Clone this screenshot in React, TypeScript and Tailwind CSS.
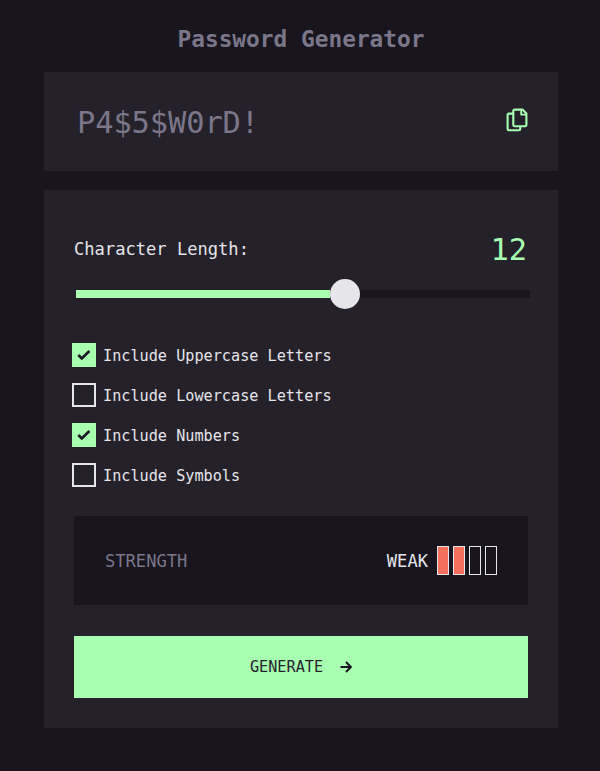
const options = [
  { label: 'Include Uppercase Letters', checked: true },
  { label: 'Include Lowercase Letters', checked: false },
  { label: 'Include Numbers', checked: true },
  { label: 'Include Symbols', checked: false },
];

function CopyIcon() {
  return (
    <svg width="22" height="24" viewBox="0 0 22 24" fill="none" stroke="#a7ffaf" strokeWidth="2.1" strokeLinejoin="round">
      <path d="M8.5 1.6h8L20.4 5.5V17a1.2 1.2 0 0 1-1.2 1.2H8.5A1.2 1.2 0 0 1 7.300 17V2.800A1.2 1.2 0 0 1 8.500 1.600Z" />
      <path d="M15.2 2v4.6h5" strokeWidth="1.9" />
      <path d="M7 5.600H2.800a1.2 1.2 0 0 0-1.200 1.200v14.300a1.2 1.2 0 0 0 1.200 1.200h10.200a1.2 1.2 0 0 0 1.200-1.200V18.500" />
    </svg>
  );
}

function Option({ label, checked }: { label: string; checked: boolean }) {
  return (
    <label className="flex h-10 items-center gap-[7px]">
      <span
        className={
          checked
            ? 'flex size-6 items-center justify-center bg-[#a7ffaf]'
            : 'size-6 border-2 border-[#e6e5ea]'
        }
      >
        {checked && (
          <svg width="14" height="12" viewBox="0 0 14 12" fill="none" stroke="#18171f" strokeWidth="2.6">
            <path d="M1.300 6 4.800 9.500 12.400 2" />
          </svg>
        )}
      </span>
      <span className="pt-0.5 text-[15.2px] leading-5">{label}</span>
    </label>
  );
}

export default function App() {
  return (
    <main className="flex h-[771px] w-[600px] flex-col bg-[#18151e] pl-11 pr-[42px] font-['DejaVu_Sans_Mono',monospace] text-[#e6e5ea]">
      <h1 className="h-[72px] pt-[23px] text-center text-[22.8px] font-bold leading-8 text-[#7b768a]">
        Password Generator
      </h1>

      <section className="flex h-[99px] items-center justify-between bg-[#24212b] pl-[33px] pr-[30px]">
        <p className="pt-0.5 text-[30.4px] leading-10 tracking-[-0.1px] text-[#7b768a]">P4$5$W0rD!</p>
        <button className="-mt-1" aria-label="Copy password">
          <CopyIcon />
        </button>
      </section>

      <section className="mt-[19px] h-[538px] bg-[#24212b] px-[30px]">
        <div className="flex h-[100px] items-center justify-between pt-[18px]">
          <span className="text-[17.1px] leading-6">Character Length:</span>
          <span className="pr-px pt-0.5 text-[30.4px] leading-10 text-[#a7ffaf]">12</span>
        </div>

        <div className="-mr-0.5 ml-0.5 mt-[-11px] flex h-[30px] items-center">
          <div className="h-2 w-[254px] bg-[#a7ffaf]" />
          <div className="size-[30px] shrink-0 rounded-full bg-[#e6e5ea]" />
          <div className="h-2 flex-1 bg-[#18151e]" />
        </div>

        <div className="-ml-0.5 mt-[26px] flex flex-col">
          {options.map((option) => (
            <Option key={option.label} {...option} />
          ))}
        </div>

        <div className="mt-[21px] flex h-[89px] items-center justify-between bg-[#18151e] px-[31px]">
          <span className="pt-0.5 text-[17.1px] text-[#7b768a]">STRENGTH</span>
          <div className="flex items-center gap-[9px]">
            <span className="pt-0.5 text-[17.1px] font-medium">WEAK</span>
            <div className="flex gap-1">
              <i className="h-[29px] w-3 border border-[#e6e5ea] bg-[#f2705c]" />
              <i className="h-[29px] w-3 border border-[#e6e5ea] bg-[#f2705c]" />
              <i className="h-[29px] w-3 border border-[#e6e5ea]" />
              <i className="h-[29px] w-3 border border-[#e6e5ea]" />
            </div>
          </div>
        </div>

        <button className="mt-[31px] flex h-[62px] w-full items-center justify-center gap-[18px] bg-[#a7ffaf] text-[#24232c]">
          <span className="text-[15.2px]">GENERATE</span>
          <svg className="-ml-px" width="12" height="12" viewBox="0 0 12 12" fill="none" stroke="#18151e" strokeWidth="2">
            <path d="M0.500 6h10M6 1l4.800 5L6 11" />
          </svg>
        </button>
      </section>
    </main>
  );
}
